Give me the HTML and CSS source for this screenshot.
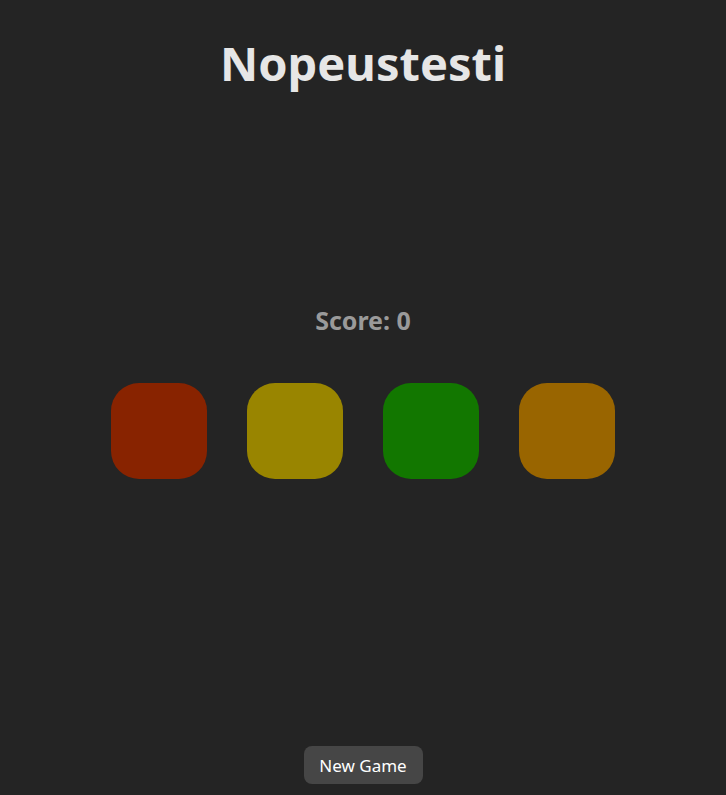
FILE: index.html
```html
<!DOCTYPE html>
<html lang="fi">
<head>
<meta charset="utf-8">
<title>Nopeustesti</title>
<link rel="stylesheet" href="styles.css">
</head>
<body>
<div class="app">
  <h1 class="title">Nopeustesti</h1>
  <div class="game">
    <div class="score">Score: 0</div>
    <div class="pads">
      <div class="pad pad-red"></div>
      <div class="pad pad-yellow"></div>
      <div class="pad pad-green"></div>
      <div class="pad pad-orange"></div>
    </div>
  </div>
  <div class="footer">
    <button class="new-game">New Game</button>
  </div>
</div>
</body>
</html>
```
FILE: styles.css
```css
html, body {
  margin: 0;
  padding: 0;
  background: #242424;
  height: 100%;
}
body {
  font-family: "Noto Sans", "Open Sans", sans-serif;
  color: #e6e6e6;
}
.app {
  height: 795px;
  display: flex;
  flex-direction: column;
  align-items: center;
}
.title {
  margin: 29px 0 0;
  font-size: 47px;
  line-height: 68px;
  font-weight: 700;
  color: #e6e6e6;
}
.game {
  margin-top: 206px;
  display: flex;
  flex-direction: column;
  align-items: center;
}
.score {
  font-size: 25px;
  line-height: 34px;
  font-weight: 700;
  color: #9a9a9a;
}
.pads {
  margin-top: 46px;
  display: flex;
  gap: 40px;
}
.pad {
  width: 96px;
  height: 96px;
  border-radius: 28px;
}
.pad-red { background: #882300; }
.pad-yellow { background: #998500; }
.pad-green { background: #127700; }
.pad-orange { background: #996500; }
.footer {
  margin-top: auto;
  padding-bottom: 11px;
}
.new-game {
  width: 119px;
  height: 38px;
  border: none;
  border-radius: 8px;
  background: #464646;
  color: #ffffff;
  font-family: "Noto Sans", "Open Sans", sans-serif;
  font-size: 17px;
  padding: 0;
}
```
